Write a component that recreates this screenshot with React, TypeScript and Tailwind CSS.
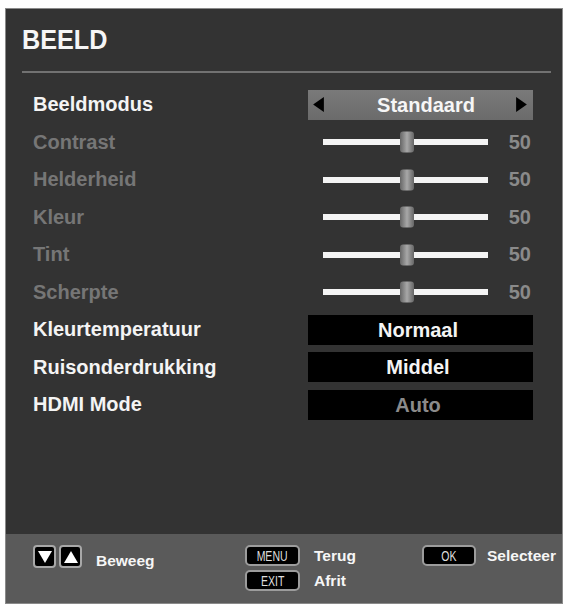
import React from "react";

const Tri = ({ dir, className }: { dir: "left" | "right" | "up" | "down"; className?: string }) => {
  const pts =
    dir === "left"
      ? "10,0 10,14 0,7"
      : dir === "right"
      ? "0,0 0,14 10,7"
      : dir === "up"
      ? "0,12 14,12 7,0"
      : "0,0 14,0 7,12";
  const vb = dir === "left" || dir === "right" ? "0 0 10 14" : "0 0 14 12";
  return (
    <svg viewBox={vb} className={className}>
      <polygon points={pts} fill="currentColor" />
    </svg>
  );
};

const Slider = ({ value }: { value: number }) => (
  <div className="w-[225px] flex items-center">
    <div className="ml-[15px] w-[165px] h-[6px] bg-[#f4f4f4] relative">
      <div className="absolute left-[77px] top-1/2 -translate-y-1/2 w-[14px] h-[21px] rounded-[3px] bg-linear-to-r from-[#666666] via-[#a8a8a8] to-[#666666]" />
    </div>
    <span className="ml-auto mr-[2px] text-[#8a8a8a]">{value}</span>
  </div>
);

const BlackBox = ({ text, dim }: { text: string; dim?: boolean }) => (
  <div
    className={`w-[225px] h-[30px] bg-black flex items-center justify-center leading-none ${
      dim ? "text-[#8a8a8a]" : "text-[#f4f4f4]"
    }`}
  >
    <span className="-ml-[5px]">{text}</span>
  </div>
);

const Row = ({
  label,
  dim,
  children,
}: {
  label: string;
  dim?: boolean;
  children: React.ReactNode;
}) => (
  <div className="h-[37.5px] flex items-center leading-[37.5px]">
    <span className={`flex-1 pl-[27px] ${dim ? "text-[#767676]" : "text-[#f4f4f4]"}`}>{label}</span>
    <div className="mr-[29px]">{children}</div>
  </div>
);

const KeyBox = ({ text, w }: { text: string; w: string }) => (
  <div
    className={`${w} h-[21px] rounded-[5px] bg-black border-2 border-[#9c9c9c] flex items-center justify-center`}
  >
    <span className="inline-block text-[15px] font-normal text-[#dedede] scale-x-70 leading-none">{text}</span>
  </div>
);

export default function App() {
  return (
    <div className="w-[568px] h-[612px] bg-white pt-[8px] px-[5px] pb-[8px] font-['Liberation_Sans',Arial,sans-serif]">
      <div className="h-full flex flex-col border border-[#8a8a8a] bg-[#333333]">
        <div className="pl-[16px] pt-[17px] h-[45px] leading-[28px]">
          <span className="inline-block text-[28px] font-bold text-[#f6f6f6] scale-x-90 origin-left">BEELD</span>
        </div>
        <div className="mt-[17px] ml-[16px] mr-[11px] h-[2px] bg-[#727272]" />
        <div className="mt-[13px] text-[20px] font-bold">
          <Row label="Beeldmodus">
            <div className="w-[225px] h-[30px] bg-linear-to-b from-[#7a7a7a] to-[#6b6b6b] flex items-center pl-[5px] pr-[6px] text-[#f6f6f6]">
              <Tri dir="left" className="w-[11px] h-[15px] text-black" />
              <span className="flex-1 text-center pl-[12px] leading-none">Standaard</span>
              <Tri dir="right" className="w-[11px] h-[15px] text-black" />
            </div>
          </Row>
          <Row label="Contrast" dim>
            <Slider value={50} />
          </Row>
          <Row label="Helderheid" dim>
            <Slider value={50} />
          </Row>
          <Row label="Kleur" dim>
            <Slider value={50} />
          </Row>
          <Row label="Tint" dim>
            <Slider value={50} />
          </Row>
          <Row label="Scherpte" dim>
            <Slider value={50} />
          </Row>
          <Row label="Kleurtemperatuur">
            <BlackBox text="Normaal" />
          </Row>
          <Row label="Ruisonderdrukking">
            <BlackBox text="Middel" />
          </Row>
          <Row label="HDMI Mode">
            <BlackBox text="Auto" dim />
          </Row>
        </div>
        <div className="mt-auto h-[69px] bg-[#5a5a5a] flex pl-[27px] pt-[11px] text-[15.5px] font-bold text-[#f6f6f6]">
          <div className="w-[212px] flex items-start">
            <div className="w-[23px] h-[23px] rounded-[4px] bg-black border-2 border-[#a8a8a8] flex items-center justify-center">
              <Tri dir="down" className="w-[14px] h-[12px] text-white" />
            </div>
            <div className="ml-[3px] w-[23px] h-[23px] rounded-[4px] bg-black border-2 border-[#a8a8a8] flex items-center justify-center">
              <Tri dir="up" className="w-[14px] h-[12px] text-white" />
            </div>
            <span className="ml-[14px] mt-[8px] leading-none">Beweeg</span>
          </div>
          <div className="w-[177px] flex flex-col gap-[4px]">
            <div className="flex items-center">
              <KeyBox text="MENU" w="w-[55px]" />
              <span className="ml-[14px] leading-none">Terug</span>
            </div>
            <div className="flex items-center">
              <KeyBox text="EXIT" w="w-[55px]" />
              <span className="ml-[14px] leading-none">Afrit</span>
            </div>
          </div>
          <div className="flex items-start">
            <div className="flex items-center">
              <KeyBox text="OK" w="w-[54px]" />
              <span className="ml-[11px] leading-none">Selecteer</span>
            </div>
          </div>
        </div>
      </div>
    </div>
  );
}
